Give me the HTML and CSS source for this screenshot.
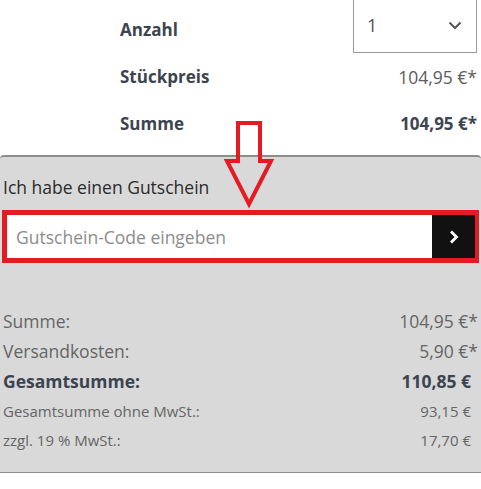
FILE: index.html
```html
<!DOCTYPE html>
<html lang="de">
<head>
<meta charset="utf-8">
<link rel="stylesheet" href="styles.css">
</head>
<body>
<div class="page">
  <div class="item">
    <div class="row">
      <span class="label">Anzahl</span>
      <div class="select">
        <span>1</span>
        <svg width="14" height="9" viewBox="0 0 14 9"><path d="M1.5 1.5 L7 7 L12.5 1.5" fill="none" stroke="#555" stroke-width="2"/></svg>
      </div>
    </div>
    <div class="row">
      <span class="label">Stückpreis</span>
      <span class="value">104,95 €*</span>
    </div>
    <div class="row">
      <span class="label">Summe</span>
      <span class="value strong">104,95 €*</span>
    </div>
  </div>

  <div class="panel">
    <div class="voucher-title">Ich habe einen Gutschein</div>
    <div class="voucher">
      <div class="voucher-input">Gutschein-Code eingeben</div>
      <div class="voucher-btn">
        <svg width="12" height="16" viewBox="0 0 12 16"><path d="M3 2.5 L8.5 8 L3 13.5" fill="none" stroke="#fff" stroke-width="2.8"/></svg>
      </div>
    </div>

    <div class="summary">
      <div class="srow"><span>Summe:</span><span>104,95 €*</span></div>
      <div class="srow"><span>Versandkosten:</span><span>5,90 €*</span></div>
      <div class="srow total"><span>Gesamtsumme:</span><span class="pad">110,85 €</span></div>
      <div class="srow small"><span>Gesamtsumme ohne MwSt.:</span><span class="pad">93,15 €</span></div>
      <div class="srow small"><span>zzgl. 19 % MwSt.:</span><span class="pad">17,70 €</span></div>
    </div>
  </div>

  <svg class="arrow" width="52" height="92" viewBox="0 0 52 92">
    <polygon points="15,4 37,4 37,42 48,42 26,85 4,42 15,42" fill="none" stroke="#e41b23" stroke-width="4"/>
  </svg>
</div>
</body>
</html>
```

FILE: styles.css
```css
html, body {
  margin: 0;
  padding: 0;
  background: #fff;
}
body {
  font-family: "Open Sans", "Noto Sans", sans-serif;
  color: #3c4450;
  overflow: hidden;
}
.page {
  position: relative;
  width: 481px;
}
.item {
  padding: 6px 4px 0 120px;
}
.row {
  height: 47px;
  display: flex;
  justify-content: space-between;
  align-items: center;
}
.label {
  font-weight: 700;
  font-size: 17px;
  color: #3c4450;
}
.value {
  font-size: 17.5px;
  color: #5c5c5c;
}
.value.strong {
  font-weight: 700;
  font-size: 17px;
  color: #3c4450;
}
.select {
  align-self: flex-end;
  box-sizing: border-box;
  width: 124px;
  height: 54px;
  border: 1px solid #9a9a9a;
  display: flex;
  align-items: center;
  justify-content: space-between;
  padding: 0 14px 2px 13px;
  font-size: 18px;
  color: #555;
}
.panel {
  margin-top: 8px;
  background: #d9d9d9;
  border-top: 2px solid #8d8d8d;
  border-bottom: 1px solid #8d8d8d;
  border-radius: 4px 4px 0 0;
  padding: 17px 3px 18px 3px;
}
.voucher-title {
  font-size: 17.5px;
  line-height: 26px;
  color: #2b2b2b;
}
.voucher {
  margin: 10px -1px 0 -1px;
  display: flex;
  border: 5px solid #e41b23;
  border-right-width: 4px;
  height: 43px;
}
.voucher-input {
  flex: 1;
  background: #fff;
  display: flex;
  align-items: center;
  padding-left: 9px;
  font-size: 17.5px;
  color: #8c8c8c;
}
.voucher-btn {
  width: 43px;
  background: #111;
  display: flex;
  align-items: center;
  justify-content: center;
}
.summary {
  margin-top: 43px;
}
.srow {
  height: 30px;
  display: flex;
  justify-content: space-between;
  align-items: center;
  font-size: 17.5px;
  color: #656565;
}
.srow.total {
  font-weight: 700;
  font-size: 17.5px;
  color: #3c4450;
}
.srow.small {
  height: 29px;
  font-size: 15px;
}
.pad {
  padding-right: 7px;
}
.arrow {
  position: absolute;
  left: 223px;
  top: 119px;
}
```
